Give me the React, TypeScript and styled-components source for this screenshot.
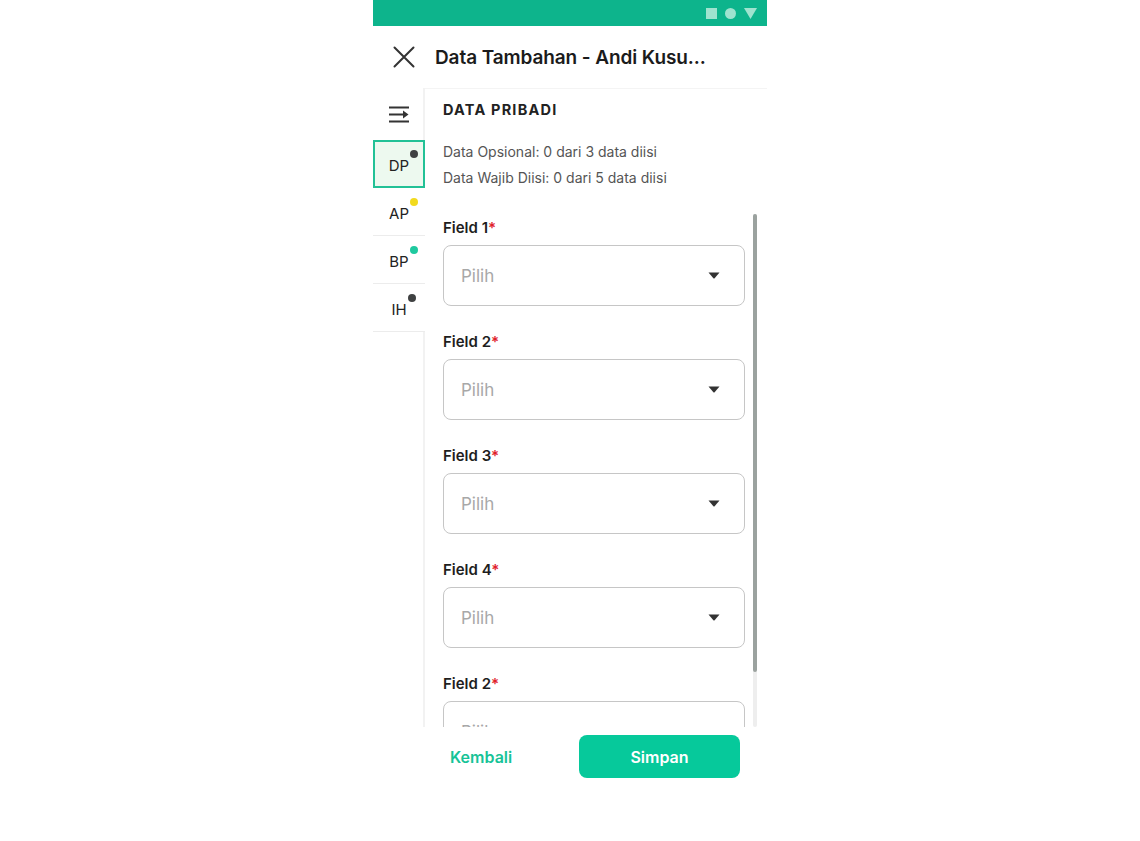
import React from "react";
import styled, { createGlobalStyle } from "styled-components";

const GlobalStyle = createGlobalStyle`
  html, body { margin: 0; padding: 0; background: #ffffff; }
  body { font-family: Inter, "Noto Sans", Arial, sans-serif; color: #1f1f1f; }
  * { box-sizing: border-box; }
`;

const Phone = styled.div`
  width: 394px;
  height: 841px;
  margin: 0 auto;
  display: flex;
  flex-direction: column;
  background: #ffffff;
`;

const StatusBar = styled.div`
  height: 26px;
  background: #0db48c;
  display: flex;
  align-items: center;
  justify-content: flex-end;
  gap: 8px;
  padding-right: 10px;
`;

const StatusSquare = styled.div`
  width: 11px;
  height: 11px;
  background: #9fe3cf;
`;

const StatusCircle = styled.div`
  width: 11px;
  height: 11px;
  border-radius: 50%;
  background: #9fe3cf;
`;

const Header = styled.div`
  height: 62px;
  display: flex;
  align-items: center;
  padding-left: 20px;
  gap: 20px;
`;

const Title = styled.h1`
  margin: 0;
  font-size: 19px;
  font-weight: 600;
  color: #1b1b1b;
  letter-spacing: -0.1px;
  white-space: nowrap;
`;

const Body = styled.div`
  display: flex;
  height: 639px;
`;

const Sidebar = styled.div`
  width: 52px;
  flex-shrink: 0;
  display: flex;
  flex-direction: column;
  border-right: 2px solid #f2f2f2;
`;

const MenuCell = styled.div`
  height: 52px;
  display: flex;
  align-items: center;
  justify-content: center;
  padding-left: 2px;
`;

const NavItem = styled.div<{ $active?: boolean }>`
  height: 48px;
  margin-right: -2px;
  display: flex;
  align-items: center;
  justify-content: center;
  font-size: 15px;
  color: #222;
  background: ${(p) => (p.$active ? "#edf9ef" : "#ffffff")};
  border: ${(p) => (p.$active ? "2px solid #22c196" : "none")};
  border-bottom: ${(p) => (p.$active ? "2px solid #22c196" : "1px solid #ececec")};
  padding-top: ${(p) => (p.$active ? "0" : "1px")};
`;

const NavLabel = styled.span`
  position: relative;
  padding-top: 2px;
`;

const Dot = styled.span<{ $color: string }>`
  position: absolute;
  left: 100%;
  top: -4px;
  margin-left: 1px;
  width: 8px;
  height: 8px;
  border-radius: 50%;
  background: ${(p) => p.$color};
`;

const Content = styled.div`
  flex: 1;
  display: flex;
  flex-direction: column;
  border-top: 1px solid #f4f4f4;
  min-width: 0;
`;

const SectionTitle = styled.h2`
  margin: 11px 0 0 18px;
  font-size: 14.5px;
  line-height: 20px;
  font-weight: 700;
  letter-spacing: 1.2px;
  color: #222;
`;

const InfoBlock = styled.div`
  margin: 19px 0 0 18px;
  display: flex;
  flex-direction: column;
`;

const InfoLine = styled.div`
  font-size: 14px;
  line-height: 26px;
  color: #555;
`;

const ScrollArea = styled.div`
  margin-top: 22px;
  flex: 1;
  display: flex;
  min-height: 0;
`;

const FieldList = styled.div`
  flex: 1;
  overflow: hidden;
  padding: 5px 0 0 18px;
  display: flex;
  flex-direction: column;
`;

const Field = styled.div`
  display: flex;
  flex-direction: column;
  flex-shrink: 0;
  margin-bottom: 26px;
`;

const Label = styled.div`
  font-size: 15px;
  line-height: 20px;
  font-weight: 600;
  color: #1e1e1e;
  margin-bottom: 7px;
`;

const Required = styled.span`
  color: #e0202b;
`;

const Select = styled.div`
  height: 61px;
  border: 1px solid #c6c6c6;
  border-radius: 8px;
  display: flex;
  align-items: center;
  justify-content: space-between;
  padding: 0 24px 0 17px;
`;

const Placeholder = styled.span`
  font-size: 17px;
  color: #a8a8a8;
`;

const ScrollTrack = styled.div`
  width: 4px;
  margin: 1px 10px 0 8px;
  background: #eeeeee;
  border-radius: 2px;
  display: flex;
  flex-direction: column;
`;

const ScrollThumb = styled.div`
  height: 458px;
  background: #9ba29f;
  border-radius: 2px;
`;

const BottomBar = styled.div`
  display: flex;
  align-items: flex-start;
  justify-content: space-between;
  padding: 8px 27px 0 77px;
  height: 64px;
`;

const BackButton = styled.button`
  border: none;
  background: none;
  padding: 0;
  height: 43px;
  font-family: inherit;
  font-size: 16px;
  font-weight: 600;
  color: #17c397;
`;

const SaveButton = styled.button`
  border: none;
  width: 161px;
  height: 43px;
  border-radius: 8px;
  background: #06c99b;
  color: #ffffff;
  font-family: inherit;
  font-size: 16px;
  font-weight: 600;
`;

const fields = ["Field 1", "Field 2", "Field 3", "Field 4", "Field 2"];

const navItems = [
  { label: "DP", color: "#3f4142", active: true },
  { label: "AP", color: "#f2da1e" },
  { label: "BP", color: "#1fc99f" },
  { label: "IH", color: "#3f4142" },
];

export default function App() {
  return (
    <>
      <GlobalStyle />
      <Phone>
        <StatusBar>
          <StatusSquare />
          <StatusCircle />
          <svg width="13" height="11" viewBox="0 0 13 11">
            <path d="M0 0 H13 L6.5 11 Z" fill="#9fe3cf" />
          </svg>
        </StatusBar>
        <Header>
          <svg width="22" height="22" viewBox="0 0 22 22">
            <path d="M1.5 1.5 L20.5 20.5 M20.5 1.5 L1.5 20.5" stroke="#333" strokeWidth="2" strokeLinecap="round" />
          </svg>
          <Title>Data Tambahan - Andi Kusu...</Title>
        </Header>
        <Body>
          <Sidebar>
            <MenuCell>
              <svg width="20" height="17" viewBox="0 0 20 17">
                <path d="M0 1.5 H20 M0 8.5 H14 M0 15.5 H20" stroke="#333" strokeWidth="2" />
                <path d="M14 4.5 L19.5 8.5 L14 12.5 Z" fill="#333" />
              </svg>
            </MenuCell>
            {navItems.map((n) => (
              <NavItem key={n.label} $active={n.active}>
                <NavLabel>
                  {n.label}
                  <Dot $color={n.color} />
                </NavLabel>
              </NavItem>
            ))}
          </Sidebar>
          <Content>
            <SectionTitle>DATA PRIBADI</SectionTitle>
            <InfoBlock>
              <InfoLine>Data Opsional: 0 dari 3 data diisi</InfoLine>
              <InfoLine>Data Wajib Diisi: 0 dari 5 data diisi</InfoLine>
            </InfoBlock>
            <ScrollArea>
              <FieldList>
                {fields.map((f, i) => (
                  <Field key={i}>
                    <Label>
                      {f}
                      <Required>*</Required>
                    </Label>
                    <Select>
                      <Placeholder>Pilih</Placeholder>
                      <svg width="12" height="7" viewBox="0 0 12 7">
                        <path d="M0.5 0.5 H11.5 L6.6 6.2 Q6 6.8 5.4 6.2 Z" fill="#333" />
                      </svg>
                    </Select>
                  </Field>
                ))}
              </FieldList>
              <ScrollTrack>
                <ScrollThumb />
              </ScrollTrack>
            </ScrollArea>
          </Content>
        </Body>
        <BottomBar>
          <BackButton>Kembali</BackButton>
          <SaveButton>Simpan</SaveButton>
        </BottomBar>
      </Phone>
    </>
  );
}
